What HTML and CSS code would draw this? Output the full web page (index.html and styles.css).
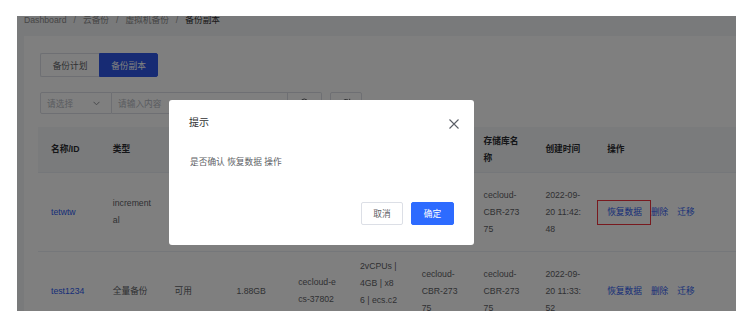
FILE: index.html
```html
<!DOCTYPE html>
<html lang="zh-CN">
<head>
<meta charset="utf-8">
<link rel="stylesheet" href="styles.css">
</head>
<body>
<div class="frame">
  <div class="page">
    <div class="crumbs">
      <span>Dashboard</span><span class="sep">/</span><span>云备份</span><span class="sep">/</span><span>虚拟机备份</span><span class="sep">/</span><span class="cur">备份副本</span>
    </div>
    <div class="card">
      <div class="tabs">
        <div class="tab">备份计划</div>
        <div class="tab active">备份副本</div>
      </div>
      <div class="filters">
        <div class="group">
          <div class="select"><span>请选择</span>
            <svg class="chev" width="7" height="5" viewBox="0 0 7 5"><path d="M0.5 0.8 L3.5 3.8 L6.5 0.8" fill="none" stroke="#909399" stroke-width="1"/></svg>
          </div>
          <div class="input">请输入内容</div>
          <div class="gbtn">
            <svg width="10" height="10" viewBox="0 0 10 10"><circle cx="4.3" cy="4.3" r="3.3" fill="none" stroke="#606266" stroke-width="1"/><path d="M6.8 6.8 L9.2 9.2" stroke="#606266" stroke-width="1"/></svg>
          </div>
        </div>
        <div class="btn">
          <svg width="10" height="10" viewBox="0 0 10 10"><path d="M8.5 3.5 A4 4 0 1 0 9 5.5" fill="none" stroke="#606266" stroke-width="1"/><path d="M8.7 0.8 V3.7 H5.8" fill="none" stroke="#606266" stroke-width="1"/></svg>
        </div>
      </div>
      <div class="table">
        <div class="row head">
          <div class="cell">名称/ID</div>
          <div class="cell">类型</div>
          <div class="cell"></div>
          <div class="cell"></div>
          <div class="cell"></div>
          <div class="cell"></div>
          <div class="cell"></div>
          <div class="cell">存储库名<br>称</div>
          <div class="cell">创建时间</div>
          <div class="cell">操作</div>
        </div>
        <div class="row">
          <div class="cell"><span class="link">tetwtw</span></div>
          <div class="cell">increment<br>al</div>
          <div class="cell"></div>
          <div class="cell"></div>
          <div class="cell"></div>
          <div class="cell"></div>
          <div class="cell"></div>
          <div class="cell">cecloud-<br>CBR-273<br>75</div>
          <div class="cell">2022-09-<br>20 11:42:<br>48</div>
          <div class="cell actions"><span class="link hl">恢复数据</span><span class="link">删除</span><span class="link">迁移</span></div>
        </div>
        <div class="row">
          <div class="cell"><span class="link">test1234</span></div>
          <div class="cell">全量备份</div>
          <div class="cell">可用</div>
          <div class="cell">1.88GB</div>
          <div class="cell">cecloud-e<br>cs-37802</div>
          <div class="cell top">2vCPUs |<br>4GB | x8<br>6 | ecs.c2</div>
          <div class="cell">cecloud-<br>CBR-273<br>75</div>
          <div class="cell">cecloud-<br>CBR-273<br>75</div>
          <div class="cell">2022-09-<br>20 11:33:<br>52</div>
          <div class="cell actions"><span class="link">恢复数据</span><span class="link">删除</span><span class="link">迁移</span></div>
        </div>
      </div>
    </div>
  </div>
  <div class="mask"></div>
  <div class="dialog">
    <div class="dlg-head">
      <span class="dlg-title">提示</span>
      <svg class="close" width="10" height="10" viewBox="0 0 10 10"><path d="M0.5 0.5 L9.5 9.5 M9.5 0.5 L0.5 9.5" stroke="#5a5e66" stroke-width="1.1"/></svg>
    </div>
    <div class="dlg-body">是否确认 恢复数据 操作</div>
    <div class="dlg-foot">
      <div class="dbtn">取消</div>
      <div class="dbtn primary">确定</div>
    </div>
  </div>
</div>
</body>
</html>
```

FILE: styles.css
```css
* { box-sizing: border-box; }
html, body { margin: 0; padding: 0; background: #ffffff; }
body {
  font-family: "Liberation Sans", "Noto Sans CJK SC", sans-serif;
  font-size: 8.7px;
  color: #606266;
}
.frame {
  position: relative;
  margin: 16px 0 0 17px;
  width: 719px;
  height: 295px;
  overflow: hidden;
}
.page {
  background: #f3f4f6;
  height: 100%;
}
.crumbs {
  height: 20px;
  line-height: 9px;
  padding-left: 7px;
  color: #8c8c8c;
  display: flex;
}
.crumbs .sep { margin: 0 7px; color: #999; }
.crumbs .cur { color: #303133; }
.card {
  margin-left: 7px;
  background: #ffffff;
  height: 400px;
  padding: 17px 0 0 14px;
}
.tabs { display: flex; margin-left: 2px; }
.tab {
  width: 59px;
  height: 24px;
  border: 1px solid #dcdfe6;
  display: flex;
  align-items: center;
  justify-content: center;
  color: #606266;
}
.tab:first-child { border-radius: 2px 0 0 2px; border-right: none; }
.tab.active {
  background: #2f57e8;
  border-color: #2f57e8;
  color: #ffffff;
  border-radius: 0 2px 2px 0;
}
.filters {
  display: flex;
  gap: 8px;
  margin: 15px 0 0 2px;
  height: 22px;
}
.group { display: flex; }
.select {
  width: 72px;
  border: 1px solid #dcdfe6;
  border-radius: 2px 0 0 2px;
  display: flex;
  align-items: center;
  justify-content: space-between;
  padding: 0 11px 0 6px;
  color: #b4b8bf;
}
.input {
  width: 176px;
  border: 1px solid #dcdfe6;
  border-left: none;
  display: flex;
  align-items: center;
  padding-left: 6px;
  color: #b4b8bf;
}
.gbtn {
  width: 34px;
  border: 1px solid #dcdfe6;
  border-left: none;
  border-radius: 0 2px 2px 0;
  display: flex;
  align-items: center;
  justify-content: center;
}
.btn {
  width: 32px;
  border: 1px solid #dcdfe6;
  border-radius: 2px;
  display: flex;
  align-items: center;
  justify-content: center;
}
.table { margin-top: 13px; }
.row {
  display: grid;
  grid-template-columns: repeat(9, 61.8px) 1fr;
  height: 79px;
  border-bottom: 1px solid #ebeef5;
  align-items: center;
  line-height: 17px;
}
.row.head {
  height: 46px;
  background: #f5f6f8;
  color: #2b2d31;
  font-weight: bold;
}
.cell {
  padding: 0 8px 0 13px;
  white-space: nowrap;
}
.cell.top { align-self: start; padding-top: 6px; }
.link { color: #2d5bf0; }
.actions { display: flex; gap: 9px; }
.hl { position: relative; }
.hl::after {
  content: "";
  position: absolute;
  left: -10px;
  right: -9px;
  top: -4px;
  bottom: -4px;
  border: 1px solid #f0323c;
}
.mask {
  position: absolute;
  inset: 0;
  background: rgba(0, 0, 0, 0.5);
}
.dialog {
  position: absolute;
  left: 152px;
  top: 84px;
  width: 305px;
  height: 145px;
  background: #ffffff;
  border-radius: 3px;
  display: flex;
  flex-direction: column;
}
.dlg-head {
  display: flex;
  justify-content: space-between;
  align-items: center;
  padding: 16px 15px 0 20px;
  height: 30px;
}
.dlg-title { font-size: 10px; line-height: 14px; color: #303133; }
.close { margin-top: 1px; }
.dlg-body {
  margin-top: 26px;
  padding-left: 21px;
  line-height: 12px;
  color: #606266;
}
.dlg-foot {
  margin-top: auto;
  display: flex;
  justify-content: flex-end;
  gap: 8px;
  padding: 0 20px 20px 0;
}
.dbtn {
  width: 42px;
  height: 23px;
  border: 1px solid #dcdfe6;
  border-radius: 2px;
  display: flex;
  align-items: center;
  justify-content: center;
  color: #606266;
}
.dbtn.primary {
  width: 43px;
  background: #2d6bff;
  border-color: #2d6bff;
  color: #ffffff;
}
```
